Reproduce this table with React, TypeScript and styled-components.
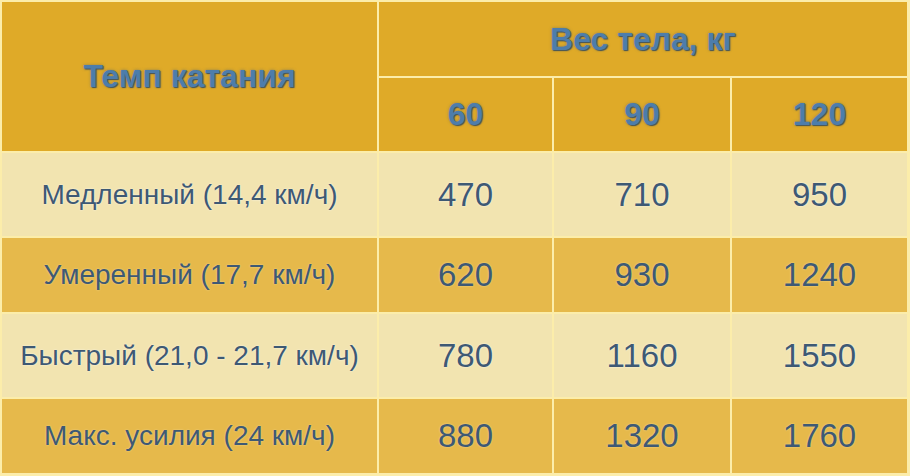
import { Fragment } from "react";
import styled, { createGlobalStyle } from "styled-components";

const Global = createGlobalStyle`
  html, body {
    margin: 0;
    padding: 0;
    background: #fcedaa;
  }
  #root {
    width: 910px;
    height: 476px;
  }
`;

const rows = [
  { label: "Медленный (14,4 км/ч)", values: ["470", "710", "950"], light: true },
  { label: "Умеренный (17,7 км/ч)", values: ["620", "930", "1240"], light: false },
  { label: "Быстрый (21,0 - 21,7 км/ч)", values: ["780", "1160", "1550"], light: true },
  { label: "Макс. усилия (24 км/ч)", values: ["880", "1320", "1760"], light: false },
];

const Table = styled.div`
  box-sizing: border-box;
  width: 910px;
  height: 476px;
  padding: 2px 3px 3px 2px;
  background: #fcedaa;
  display: grid;
  grid-template-columns: 375px 173px 176px 175px;
  grid-template-rows: 74px 73px 83px 74px 83px 74px;
  gap: 2px;
  font-family: "Liberation Sans", Arial, sans-serif;
`;

const HeadCell = styled.div<{ $span?: number; $rows?: number }>`
  background: #dfaa28;
  display: flex;
  align-items: center;
  justify-content: center;
  grid-column: span ${(p) => p.$span ?? 1};
  grid-row: span ${(p) => p.$rows ?? 1};
  color: #4d7dab;
  font-weight: bold;
  font-size: 32px;
  text-shadow: 1px 1px 1px rgba(45, 70, 95, 0.85), 0 0 3px rgba(60, 90, 120, 0.5);
`;

const Cell = styled.div<{ $light: boolean; $num?: boolean }>`
  background: ${(p) => (p.$light ? "#f2e4b0" : "#e6b94b")};
  display: flex;
  align-items: center;
  justify-content: center;
  color: #3e5974;
  font-size: ${(p) => (p.$num ? "33px" : "28px")};
  text-shadow: 0 0 2px ${(p) => (p.$light ? "rgba(255,255,255,0.8)" : "rgba(255,240,200,0.6)")};
`;

export default function App() {
  return (
    <>
      <Global />
      <Table>
        <HeadCell $rows={2}>Темп катания</HeadCell>
        <HeadCell $span={3}>Вес тела, кг</HeadCell>
        <HeadCell>60</HeadCell>
        <HeadCell>90</HeadCell>
        <HeadCell>120</HeadCell>
        {rows.map((r) => (
          <Fragment key={r.label}>
            <Cell $light={r.light}>{r.label}</Cell>
            {r.values.map((v) => (
              <Cell key={v} $light={r.light} $num>
                {v}
              </Cell>
            ))}
          </Fragment>
        ))}
      </Table>
    </>
  );
}
